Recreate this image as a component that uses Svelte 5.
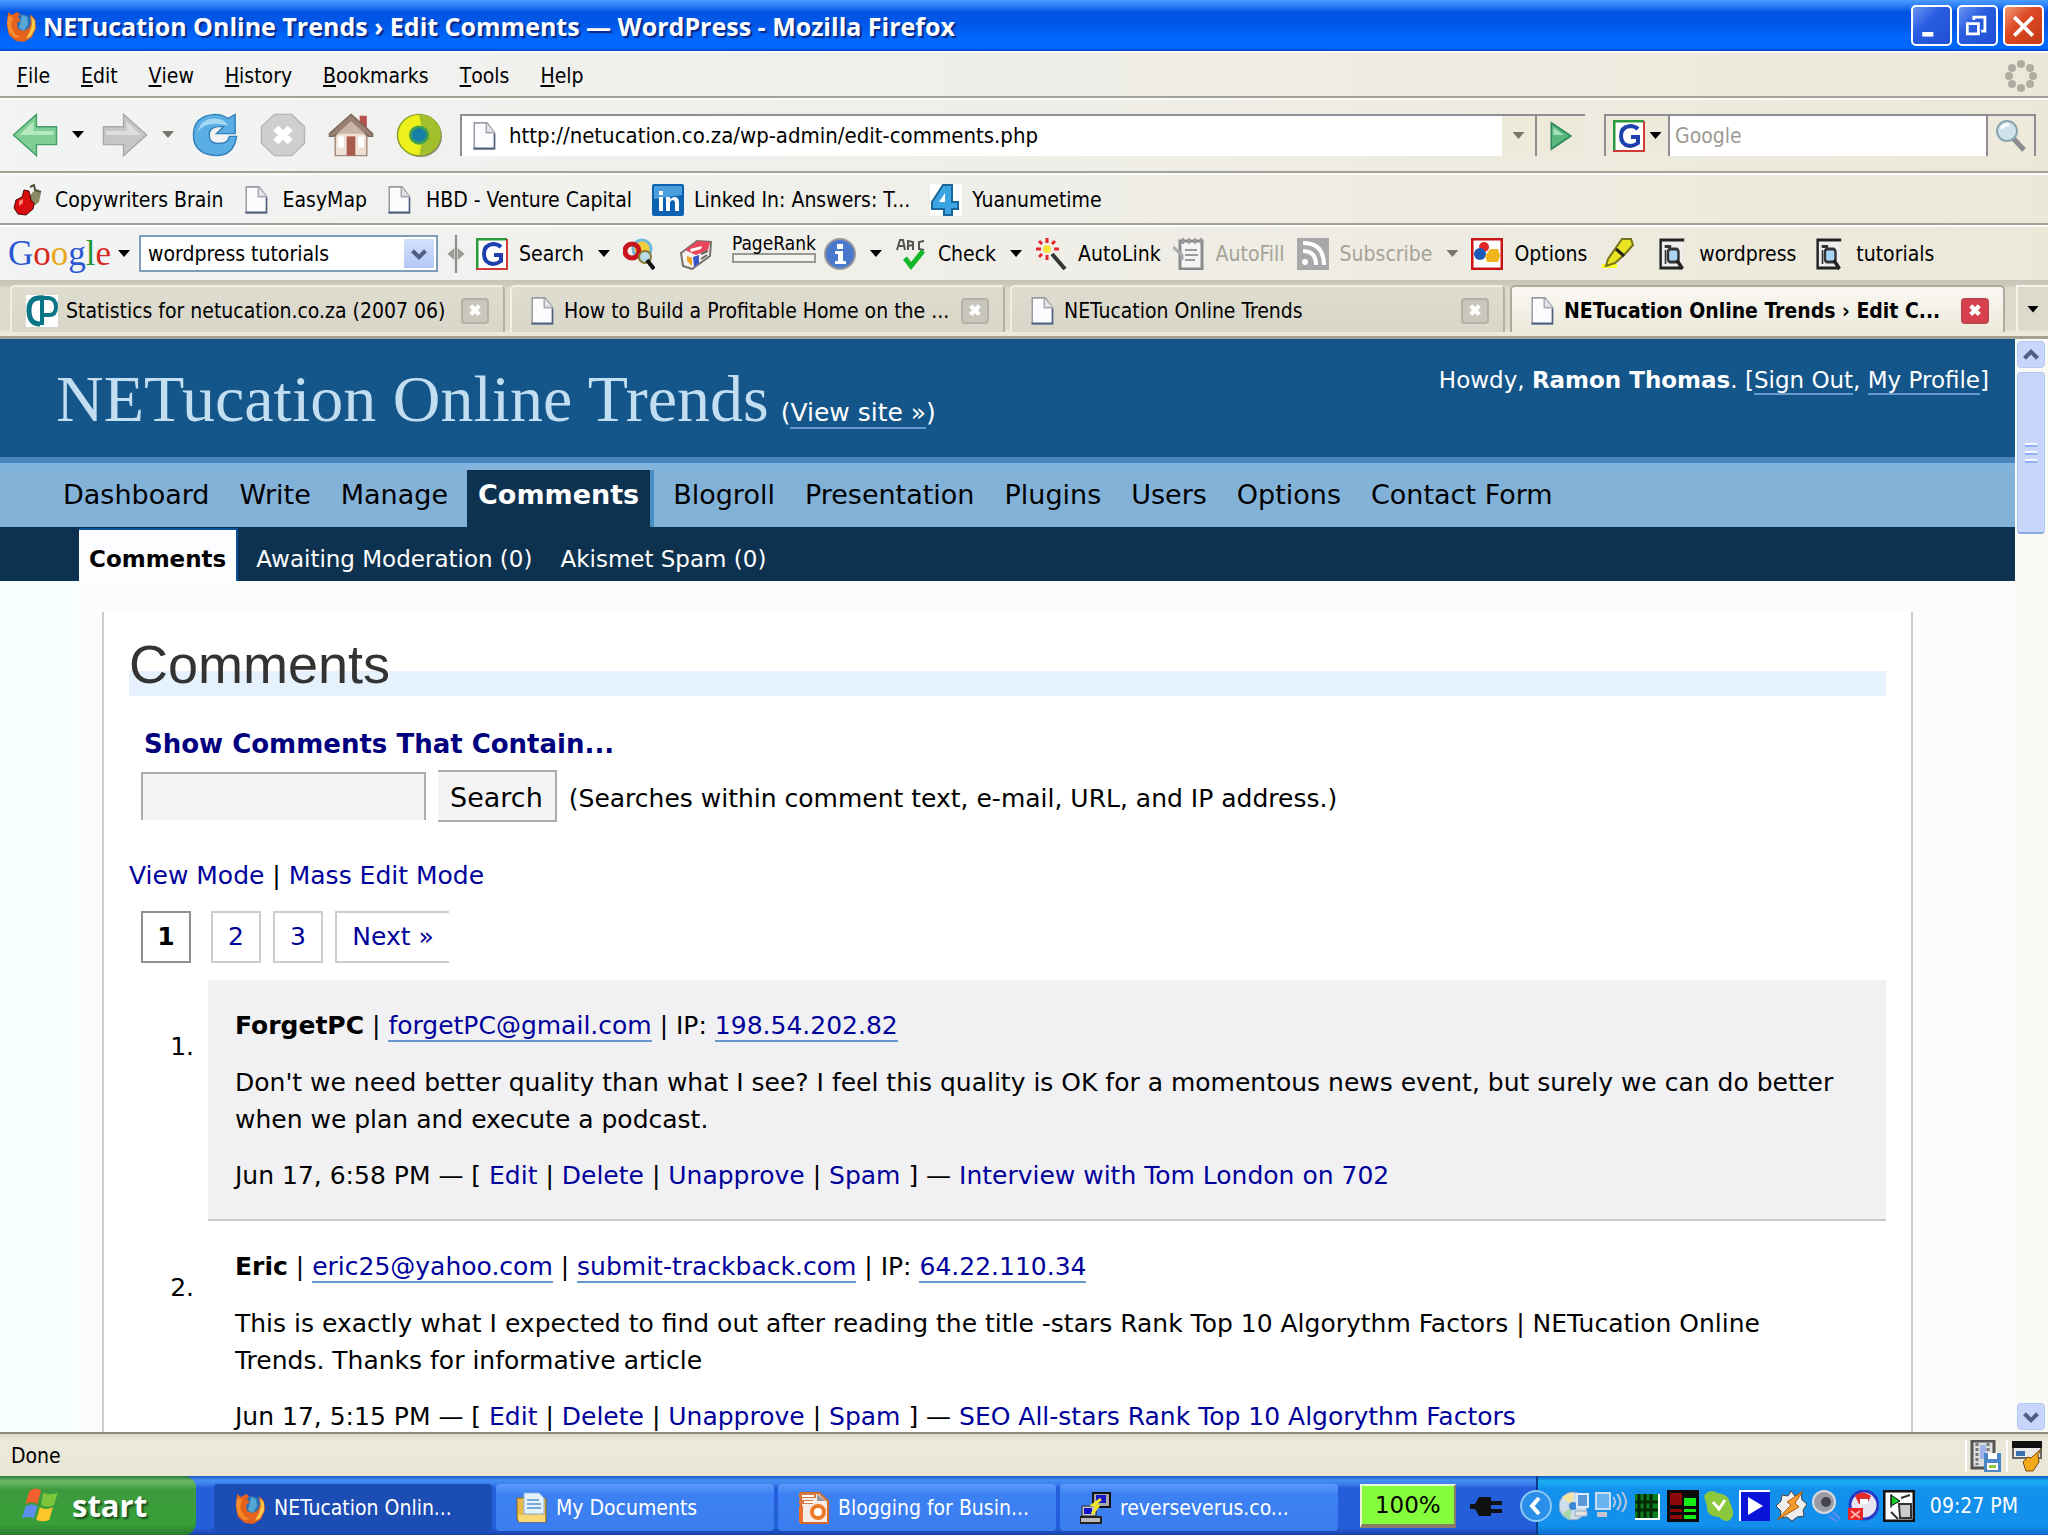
<script>
    let url = $state('http://netucation.co.za/wp-admin/edit-comments.php');
    let toolbarQuery = $state('wordpress tutorials');
    let webQuery = $state('');
    let commentQuery = $state('');

    const menus = ['File', 'Edit', 'View', 'History', 'Bookmarks', 'Tools', 'Help'];

    const bookmarks = [
        { icon: 'cherry', label: 'Copywriters Brain' },
        { icon: 'page', label: 'EasyMap' },
        { icon: 'page', label: 'HBD - Venture Capital' },
        { icon: 'linkedin', label: 'Linked In: Answers: T...' },
        { icon: 'four', label: 'Yuanumetime' }
    ];

    const tabs = [
        { icon: 'stats', label: 'Statistics for netucation.co.za (2007 06)' },
        { icon: 'page', label: 'How to Build a Profitable Home on the ...' },
        { icon: 'page', label: 'NETucation Online Trends' },
        { icon: 'page', label: 'NETucation Online Trends › Edit C...', active: true }
    ];

    const nav = ['Dashboard', 'Write', 'Manage', 'Comments', 'Blogroll', 'Presentation', 'Plugins', 'Users', 'Options', 'Contact Form'];
    const subnav = ['Comments', 'Awaiting Moderation (0)', 'Akismet Spam (0)'];
    const actions = ['Edit', 'Delete', 'Unapprove', 'Spam'];

    const comments = [
        {
            author: 'ForgetPC',
            links: ['forgetPC@gmail.com'],
            ip: '198.54.202.82',
            text: "Don't we need better quality than what I see? I feel this quality is OK for a momentous news event, but surely we can do better when we plan and execute a podcast.",
            date: 'Jun 17, 6:58 PM',
            post: 'Interview with Tom London on 702'
        },
        {
            author: 'Eric',
            links: ['eric25@yahoo.com', 'submit-trackback.com'],
            ip: '64.22.110.34',
            text: 'This is exactly what I expected to find out after reading the title -stars Rank Top 10 Algorythm Factors | NETucation Online Trends. Thanks for informative article',
            date: 'Jun 17, 5:15 PM',
            post: 'SEO All-stars Rank Top 10 Algorythm Factors'
        }
    ];

    const tasks = [
        { icon: 'firefox', label: 'NETucation Onlin...', active: true },
        { icon: 'folder', label: 'My Documents' },
        { icon: 'blog', label: 'Blogging for Busin...' },
        { icon: 'putty', label: 'reverseverus.co...' }
    ];

    const tray = ['disc', 'wireless', 'grid', 'meter', 'check', 'play', 'bolt', 'speaker', 'badge', 'card'];
</script>

{#snippet icon(name)}
    <svg class="icon icon-{name}" viewBox="0 0 32 32" preserveAspectRatio="none" aria-hidden="true">
        {#if name === 'firefox'}
            <circle cx="17" cy="16" r="12" fill="#2a6fb5" />
            <path d="M17 5l5 2 1 7-4 7-5-3z" fill="#55a7d8" />
            <path d="M3 2l4 3 5-3 3 2-2 4 3 2-4 3 1 6 6 2 5-3 2-6-1-8 5 5 1 9-4 9-8 5-8-1-7-6-2-9z" fill="#e4621c" />
            <path d="M26 6l4 5v8l-4 7-5 3 4-8 2-7z" fill="#f8c84a" />
            <path d="M3 6l5 1-2 9 4 8 6 3-6 1-6-6-2-9z" fill="#f58b2b" />
        {:else if name === 'page'}
            <path d="M3 1h17l10 11v19H3z" fill="#fcfcff" stroke="#9a9aa4" stroke-width="2" />
            <path d="M19 1v11h11" fill="#e4e4ea" stroke="#a8a8b0" stroke-width="2" />
            <path d="M2 30h28V13" fill="none" stroke="#4b6280" stroke-width="2" />
        {:else if name === 'cherry'}
            <path d="M14 14l8-8 6 3-2 9-6 5" fill="#8b8a62" />
            <path d="M17 3l4-2 1 5 6 2" fill="none" stroke="#55523a" stroke-width="2" />
            <path d="M11 6l5 1 2 9 3 3-1 6-7 6-8-1-4-6 2-8 6-3z" fill="#d80c0c" stroke="#4a0a08" stroke-width="1" />
            <path d="M6 17l4-2v4l-4 3z" fill="#ff8070" />
        {:else if name === 'linkedin'}
            <rect width="32" height="32" rx="2" fill="#0b63b2" />
            <path d="M2 2h28v9L2 15z" fill="#4b9edd" />
            <path d="M7 13h4v14H7zM7 7h4v4H7zM14 13h4v2q7-5 9 2v10h-4v-9q-2-4-5 0v9h-4z" fill="#fff" />
        {:else if name === 'four'}
            <rect width="32" height="32" fill="#fff" />
            <path d="M13 1h9v17h6v7h-6v6h-8v-6H2v-7z" fill="#3ca4e0" stroke="#1b6698" stroke-width="2" />
            <path d="M15 9v9H9z" fill="#fff" />
        {:else if name === 'stats'}
            <rect width="32" height="32" fill="#fff" />
            <path d="M16 30V3h7q7 1 7 9t-7 8h-7" fill="none" stroke="#087686" stroke-width="4" />
            <path d="M18 3Q3 1 3 15t11 14" fill="none" stroke="#087686" stroke-width="5" />
        {:else if name === 'back'}
            <path d="M1 16L17 1v9h14v13H17v8z" fill="#7fce96" stroke="#459f68" />
            <path d="M5 16l10-10v7h14v3z" fill="#b5e8be" />
        {:else if name === 'forward'}
            <path d="M31 16L15 1v9H1v13h14v8z" fill="#c6c6c9" stroke="#a9a9ac" />
            <path d="M27 16L17 6v7H3v3z" fill="#dededf" />
        {:else if name === 'reload'}
            <path d="M30 1v14H17l5-5q-10-1-10 6t8 6q5 0 6-5h5q-2 14-14 14Q1 30 1 16T16 1q5 0 9 3z" fill="#5aaee4" stroke="#2e7fba" />
            <path d="M4 14Q6 4 16 4q6 0 9 5-16-4-21 5z" fill="#a5d8f5" />
        {:else if name === 'stop'}
            <path d="M10 1h12l9 9v12l-9 9H10l-9-9V10z" fill="#cfcfcf" stroke="#b5b5b5" />
            <path d="M11 11l10 10M21 11L11 21" stroke="#fff" stroke-width="5" />
        {:else if name === 'home'}
            <path d="M22 2h5v9h-5z" fill="#b5524e" />
            <path d="M5 14h22v17H5z" fill="#efe0d5" stroke="#a58a7a" />
            <path d="M16 1l15 14v2h-3L16 7 4 17H1v-2z" fill="#9a8172" stroke="#7d685c" />
            <path d="M16 6L6 15h20z" fill="#c9b5a6" />
            <path d="M13 17h6v14h-6z" fill="#a85a4c" />
            <path d="M7 17h4v8H7zM21 17h4v8h-4z" fill="#fff" />
        {:else if name === 'orb'}
            <circle cx="17" cy="17" r="15" fill="#8a8a78" />
            <circle cx="16" cy="16" r="15" fill="#eef01c" stroke="#88a028" />
            <path d="M16 1a15 15 0 0 1 0 30l3-15z" fill="#a3c02c" />
            <circle cx="16" cy="16" r="6" fill="#1680a8" stroke="#3fa050" stroke-width="2" />
        {:else if name === 'go'}
            <path d="M3 2l26 14L3 30z" fill="#58b880" stroke="#2e8a58" stroke-width="2" />
            <path d="M6 7l14 8H6z" fill="#a5dfb8" />
        {:else if name === 'google'}
            <rect width="32" height="32" fill="#fff" />
            <path d="M1 32V1h30" fill="none" stroke="#2a9a3a" stroke-width="3" />
            <path d="M31 1v30H0" fill="none" stroke="#d23a3a" stroke-width="2" />
            <path d="M25 9Q22 6 17 6 8 7 8 16t9 10q4 0 8-3v-6h-7" fill="none" stroke="#1e3fae" stroke-width="4" />
        {:else if name === 'magnifier'}
            <path d="M18 18l11 12" stroke="#8b8b92" stroke-width="5" />
            <circle cx="12" cy="11" r="10" fill="#cfe3ea" stroke="#8aa5b0" stroke-width="2" />
            <path d="M6 9q3-5 8-4" stroke="#fff" stroke-width="3" fill="none" />
        {:else if name === 'splitter'}
            <path d="M16 0v32" stroke="#8e8e8a" stroke-width="4" />
            <path d="M13 11v10L1 16zM19 11v10l12-5z" fill="#9a9a96" />
        {:else if name === 'people'}
            <circle cx="19" cy="11" r="9" fill="#f0cf3c" stroke="#72b8d8" stroke-width="3" />
            <circle cx="9" cy="13" r="7" fill="none" stroke="#c8141c" stroke-width="5" />
            <circle cx="22" cy="19" r="6" fill="#b8dce8" stroke="#8a7a30" stroke-width="2" />
            <path d="M24 22l7 9" stroke="#111" stroke-width="4" />
        {:else if name === 'news'}
            <path d="M1 15L17 3l14 1-1 14-18 13-9-3z" fill="#f4f0ee" stroke="#77706c" stroke-width="2" />
            <path d="M5 12L18 3l12 1-2 8-12 5z" fill="#e8445c" />
            <path d="M10 11l12-3-1 3-10 3z" fill="#fff" />
            <path d="M7 18l5 2v8l-5-5z" fill="#f5a418" />
            <path d="M13 19l6-2v8l-5 4z" fill="#3555c8" />
            <path d="M21 16l7-3M21 21l6-4" stroke="#666" stroke-width="2" />
        {:else if name === 'info'}
            <circle cx="16" cy="16" r="15" fill="#4a78cc" stroke="#999" stroke-width="2" />
            <path d="M13 6h6v5h-6zM11 13h8v10h3v3H11v-3h3v-7h-3z" fill="#fff" />
        {:else if name === 'spell'}
            <path d="M2 12l3-10h3l2 10M4 8h5M13 2v10M13 3l5 1v3l-5 1M18 8v4M29 3l-5 1v7l5 1" fill="none" stroke="#555" stroke-width="2" />
            <path d="M10 20l6 8L28 13" fill="none" stroke="#12b82a" stroke-width="5" />
        {:else if name === 'wand'}
            <path d="M12 0v5M12 17v5M1 11h5M19 11h5M4 3l3 3M20 3l-3 3M4 19l3-3" stroke="#e42828" stroke-width="3" />
            <circle cx="12" cy="11" r="4" fill="#ffe43c" />
            <path d="M17 16l13 15" stroke="#333" stroke-width="4" />
        {:else if name === 'form'}
            <path d="M7 3h22v28H7z" fill="#f4f4f4" stroke="#8b8b8b" stroke-width="3" />
            <path d="M10 0v6M16 0v6M22 0v6M28 0v6M12 12h12M12 17h13M12 22h10" stroke="#999" stroke-width="2" />
            <path d="M0 9l9 8v5" fill="none" stroke="#aaa" stroke-width="3" />
        {:else if name === 'feed'}
            <rect width="32" height="32" fill="#a8a8a8" />
            <circle cx="8" cy="24" r="3" fill="#fff" />
            <path d="M6 13q13 0 13 14M6 5q21 0 21 22" fill="none" stroke="#fff" stroke-width="4" />
        {:else if name === 'options'}
            <rect x="1" y="1" width="30" height="30" fill="#fff" stroke="#c81414" stroke-width="3" />
            <circle cx="13" cy="9" r="5" fill="#e02828" />
            <circle cx="9" cy="16" r="6" fill="#1c58b8" />
            <path d="M14 18l5-7h8l2 7-2 6H16z" fill="#f0b41c" />
        {:else if name === 'marker'}
            <path d="M0 26h15v4H0z" fill="#ffff28" />
            <path d="M20 1h9l2 6-9 10-9 8-9 3 2-7z" fill="#e8e424" stroke="#77741c" stroke-width="2" />
            <path d="M14 11l8 7" stroke="#222" stroke-width="3" />
        {:else if name === 'find'}
            <path d="M3 2h26v28H3z" fill="#eee" />
            <path d="M31 2H2v28h25" fill="none" stroke="#222" stroke-width="3" />
            <path d="M7 7h8v3H7zM7 12h2v14H7z" fill="#333" />
            <rect x="11" y="11" width="13" height="13" rx="3" fill="#a8d4f5" stroke="#333" stroke-width="3" />
            <path d="M22 22l7 9" stroke="#222" stroke-width="4" />
        {:else if name === 'throbber'}
            <g fill="#b0aca2">
                <circle cx="16" cy="4" r="4" /><circle cx="25" cy="8" r="4" /><circle cx="28" cy="16" r="4" /><circle cx="25" cy="24" r="4" />
                <circle cx="16" cy="28" r="4" /><circle cx="7" cy="24" r="4" /><circle cx="4" cy="16" r="4" /><circle cx="7" cy="8" r="4" />
            </g>
        {:else if name === 'up' || name === 'down'}
            <path d={name === 'up' ? 'M8 20l8-8 8 8' : 'M8 12l8 8 8-8'} fill="none" stroke="#4d6185" stroke-width="5" />
        {:else if name === 'saver'}
            <rect x="2" y="1" width="22" height="27" fill="#ddd" stroke="#555" stroke-width="3" />
            <path d="M7 3v22M18 3v22" stroke="#777" stroke-width="3" stroke-dasharray="3 2" />
            <path d="M10 5h6v14h-6z" fill="#9fb4e8" />
            <path d="M14 13h17v19H14z" fill="#4a88c8" />
            <path d="M18 13h9v6h-9zM17 23h11v7H17z" fill="#fff" />
            <path d="M19 25h7v3h-7z" fill="#8cc83c" />
        {:else if name === 'bug'}
            <rect x="2" y="2" width="28" height="16" fill="#e8e8e8" stroke="#666" stroke-width="2" />
            <path d="M1 1h30v7H1z" fill="#111" />
            <path d="M5 11h9v5H5z" fill="#3a70b0" />
            <path d="M30 9l-3 6 1 7-6 9h-7l-3-9 5-5 3 1z" fill="#f4a81c" stroke="#7a4c08" />
        {:else if name === 'windows'}
            <path d="M6 4q5-5 10-1l-3 12q-5-3-10 0z" fill="#f2602c" />
            <path d="M18 5q6 3 12 0l-3 11q-5 3-11 0z" fill="#7cc43a" />
            <path d="M3 17q5-3 10 0l-3 11Q6 25 0 28z" fill="#5c8df0" />
            <path d="M15 18q5 3 11 0l-3 11q-5 3-11 0z" fill="#fcc52c" />
        {:else if name === 'folder'}
            <path d="M1 6h7V3h16l6 4v23H3l-2-3z" fill="#e9b84a" stroke="#8a6418" />
            <path d="M8 1h15l5 5v16H8z" fill="#e4f1fc" stroke="#8ab4d8" />
            <path d="M11 8h12M11 12h14M11 16h14" stroke="#78a8d8" stroke-width="2" />
            <path d="M2 23h27v7H3z" fill="#fbd876" />
        {:else if name === 'blog'}
            <path d="M3 1h18l9 8v22H3z" fill="#f4ebe4" stroke="#d86828" stroke-width="2" />
            <path d="M1 1h17v5H1zM1 8h14v4H1z" fill="#d87840" />
            <path d="M4 3h12v2H4zM6 9h10v2H6z" fill="#fff" />
            <path d="M19 2l9 7h-9z" fill="#999" />
            <circle cx="20" cy="20" r="6" fill="#fff" stroke="#ee7a28" stroke-width="4" />
            <path d="M3 14v16" stroke="#e8702c" stroke-width="4" />
        {:else if name === 'putty'}
            <path d="M13 1h17v14H13z" fill="#a8a8a8" stroke="#111" stroke-width="2" />
            <path d="M16 3h10v8H16z" fill="#1414c8" />
            <path d="M2 14h14v10H2z" fill="#c4c4c4" stroke="#222" />
            <path d="M4 16h8v6H4z" fill="#1414c8" />
            <path d="M0 25h21v6H0z" fill="#bbb" stroke="#222" stroke-width="2" />
            <path d="M21 7l-8 6 5 1-6 8" fill="none" stroke="#f0e428" stroke-width="3" />
        {:else if name === 'plug'}
            <path d="M0 14h5l4-7h12v4h11v4H21v4h11v4H21v3H9l-4-7H0z" fill="#111" />
        {:else if name === 'collapse'}
            <circle cx="16" cy="16" r="15" fill="#2a8fe8" stroke="#8cc8f4" stroke-width="2" />
            <path d="M19 8l-7 8 7 8" fill="none" stroke="#fff" stroke-width="4" />
        {:else if name === 'disc'}
            <circle cx="14" cy="16" r="14" fill="#cfdcec" stroke="#8fa6c0" />
            <path d="M14 16L3 7l11-5z" fill="#f4e6a0" />
            <path d="M14 16l-11 8 8 6z" fill="#a8d8a8" />
            <circle cx="14" cy="16" r="4" fill="#3a8ad8" />
            <path d="M18 4h11v13H18z" fill="#5c98d8" stroke="#dceaf8" stroke-width="2" />
            <path d="M16 21h12v5H16z" fill="#e4e4e4" stroke="#8fa6c0" />
        {:else if name === 'wireless'}
            <path d="M1 3h14v16H1z" fill="#6ab2f0" stroke="#c8ddf0" stroke-width="2" />
            <path d="M2 22h10v5H2z" fill="#c4c4cc" />
            <path d="M18 7q4 5 0 10M22 4q7 8 0 16M27 2q8 10 0 20" fill="none" stroke="#b8c8dc" stroke-width="2" />
        {:else if name === 'grid'}
            <rect x="4" y="4" width="23" height="24" fill="#0c7c1c" />
            <path d="M8 4v24M14 4v24M20 4v24M4 12h23M4 20h23" stroke="#022806" stroke-width="3" />
            <path d="M4 29h24V4" fill="none" stroke="#fff" stroke-width="2" />
        {:else if name === 'meter'}
            <rect width="32" height="32" fill="#0a0a0a" />
            <path d="M3 3h12v12H3zM3 19h12v3H3zM3 25h12v4H3z" fill="#8c0808" />
            <path d="M17 8h12v8H17zM17 19h12v3H17zM17 25h12v4H17z" fill="#14ec14" />
        {:else if name === 'check'}
            <path d="M1 6q6-8 13-3 12 1 13 10 7 14-2 18-6 0-9-4Q3 26 4 16z" fill="#8cc83c" />
            <path d="M10 12l6 7 6-9" fill="none" stroke="#fff" stroke-width="3" />
        {:else if name === 'play'}
            <rect x="1" y="1" width="30" height="30" fill="#0a14d8" />
            <path d="M1 31V1h30" fill="none" stroke="#fff" stroke-width="2" />
            <path d="M9 7l15 9-15 9z" fill="#fff" />
        {:else if name === 'bolt'}
            <path d="M16 1l4 5 6-3 1 7 5 4-4 6 1 6-7 1-5 4-5-4-7 1 1-7-5-5 5-5 1-6 6 1z" fill="#eee" stroke="#444" />
            <path d="M28 1L12 12l4 3L2 30l22-13-4-4z" fill="#f49c2c" stroke="#a85c10" />
        {:else if name === 'speaker'}
            <ellipse cx="13" cy="12" rx="11" ry="11" fill="#9c9ca4" stroke="#dadade" stroke-width="2" />
            <circle cx="15" cy="12" r="5" fill="#44444c" />
            <path d="M18 26l7 5M22 22l7 7" stroke="#6c8cf0" stroke-width="2" />
        {:else if name === 'badge'}
            <circle cx="17" cy="15" r="14" fill="#e8e4f0" stroke="#2838c8" stroke-width="3" />
            <path d="M8 6q7-7 16 0l-4 8h-8z" fill="#e02c2c" />
            <path d="M13 9h8v5h-8z" fill="#fff" />
            <path d="M1 18h15v12H1z" fill="#ec2424" />
            <path d="M4 21l9 7M13 21l-9 7" stroke="#ffb0b0" stroke-width="2" />
        {:else if name === 'card'}
            <rect x="1" y="1" width="30" height="30" fill="#fff" stroke="#111" stroke-width="3" />
            <path d="M18 8l9-3M16 14h12v14H17zM8 22l7 7" stroke="#333" fill="#ccc" stroke-width="2" />
            <path d="M8 4v14M8 5l9 6-9 5z" fill="#14c828" stroke="#111" />
        {/if}
    </svg>
{/snippet}

{#snippet links(author)}
    {#each author.links as link}
        | <a class="lined" href="#{link}">{link}</a>{' '}
    {/each}
    | IP: <a class="lined" href="#{author.ip}">{author.ip}</a>
{/snippet}

<div class="desktop">
    <header class="titlebar">
        {@render icon('firefox')}
        <h1>NETucation Online Trends › Edit Comments — WordPress - Mozilla Firefox</h1>
        <button class="win" aria-label="Minimize"><svg viewBox="0 0 40 41"><path d="M10 27h12v5H10z" fill="#fff" /></svg></button>
        <button class="win" aria-label="Restore"><svg viewBox="0 0 40 41"><path d="M16 14v-3h12v15h-4" fill="none" stroke="#fff" stroke-width="3" /><path d="M9 18h12v11H9z" fill="none" stroke="#fff" stroke-width="3" /></svg></button>
        <button class="win close" aria-label="Close"><svg viewBox="0 0 40 41"><path d="M10 11l20 20M30 11L10 31" stroke="#fff" stroke-width="4" /></svg></button>
    </header>

    <nav class="menubar bar">
        {#each menus as menu}
            <button><u>{menu[0]}</u>{menu.slice(1)}</button>
        {/each}
        <span class="fill"></span>
        {@render icon('throbber')}
    </nav>

    <div class="navbar bar">
        <button aria-label="Back">{@render icon('back')}</button>
        <button class="arrow" aria-label="Back history"></button>
        <button aria-label="Forward">{@render icon('forward')}</button>
        <button class="arrow dim" aria-label="Forward history"></button>
        <button aria-label="Reload">{@render icon('reload')}</button>
        <button aria-label="Stop">{@render icon('stop')}</button>
        <button aria-label="Home">{@render icon('home')}</button>
        <button aria-label="StumbleUpon">{@render icon('orb')}</button>
        <div class="address">
            {@render icon('page')}
            <input type="text" aria-label="Location" bind:value={url} />
            <button class="drop" aria-label="Show history"><i class="arrow dim"></i></button>
            <button class="go" aria-label="Go">{@render icon('go')}</button>
        </div>
        <div class="websearch">
            <button class="engine" aria-label="Search engine">{@render icon('google')}<i class="arrow"></i></button>
            <input type="text" aria-label="Web search" placeholder="Google" bind:value={webQuery} />
            <button class="look" aria-label="Search the web">{@render icon('magnifier')}</button>
        </div>
    </div>

    <nav class="bookmarks bar">
        {#each bookmarks as mark}
            <a href="#{mark.icon}">{@render icon(mark.icon)}<span>{mark.label}</span></a>
        {/each}
    </nav>

    <div class="toolbar bar">
        <button class="logo" aria-label="Google"><b class="blue">G</b><b class="red">o</b><b class="yellow">o</b><b class="blue">g</b><b class="green">l</b><b class="red">e</b></button>
        <i class="arrow"></i>
        <div class="combo">
            <input type="text" aria-label="Google toolbar search" bind:value={toolbarQuery} />
            <button aria-label="Recent searches">{@render icon('down')}</button>
        </div>
        {@render icon('splitter')}
        <button class="tool">{@render icon('google')}<span>Search</span></button>
        <i class="arrow"></i>
        <button class="tool roomy" aria-label="Groups">{@render icon('people')}</button>
        <button class="tool" aria-label="News">{@render icon('news')}</button>
        <div class="rank"><span>PageRank</span><i></i></div>
        <button class="tool" aria-label="Page info">{@render icon('info')}</button>
        <i class="arrow"></i>
        <button class="tool">{@render icon('spell')}<span>Check</span></button>
        <i class="arrow"></i>
        <button class="tool">{@render icon('wand')}<span>AutoLink</span></button>
        <button class="tool off">{@render icon('form')}<span>AutoFill</span></button>
        <button class="tool off">{@render icon('feed')}<span>Subscribe</span></button>
        <i class="arrow dim"></i>
        <button class="tool">{@render icon('options')}<span>Options</span></button>
        <button class="tool roomy" aria-label="Highlight">{@render icon('marker')}</button>
        <button class="tool word">{@render icon('find')}<span>wordpress</span></button>
        <button class="tool word">{@render icon('find')}<span>tutorials</span></button>
    </div>

    <div class="tabs">
        {#each tabs as tab}
            <div class="tab" class:active={tab.active}>
                <button class="pick">{@render icon(tab.icon)}<span>{tab.label}</span></button>
                <button class="shut" aria-label="Close tab"><svg viewBox="0 0 28 26"><path d="M9 8l10 10M19 8L9 18" stroke="#fff" stroke-width="5" /></svg></button>
            </div>
        {/each}
        <button class="alltabs" aria-label="List all tabs"><i class="arrow"></i></button>
    </div>

    <div class="view">
        <main>
            <header class="head">
                <div class="site">
                    <h1>NETucation Online Trends</h1>
                    <span>(<a class="lined" href="#site">View site »</a>)</span>
                </div>
                <p>Howdy, <strong>Ramon Thomas</strong>. [<a class="lined" href="#out">Sign Out</a>, <a class="lined" href="#profile">My Profile</a>]</p>
            </header>
            <nav class="adminmenu">
                {#each nav as item}
                    <a href="#{item}" class:current={item === 'Comments'}>{item}</a>
                {/each}
            </nav>
            <nav class="submenu">
                {#each subnav as item, i}
                    <a href="#{item}" class:current={i === 0}>{item}</a>
                {/each}
            </nav>
            <div class="page">
                <div class="wrap">
                    <h2>Comments</h2>
                    <form class="search" onsubmit={(event) => event.preventDefault()}>
                        <label class="legend" for="comment-search">Show Comments That Contain...</label>
                        <div class="row">
                            <input id="comment-search" type="text" bind:value={commentQuery} />
                            <button>Search</button>
                            <span>(Searches within comment text, e-mail, URL, and IP address.)</span>
                        </div>
                    </form>
                    <p class="modes"><a href="#view">View Mode</a> | <a href="#mass">Mass Edit Mode</a></p>
                    <div class="pager">
                        <strong>1</strong><a href="#p2">2</a><a href="#p3">3</a><a class="next" href="#next">Next »</a>
                    </div>
                    <ol>
                        {#each comments as comment, i}
                            <li>
                                <span class="num">{i + 1}.</span>
                                <div class="comment" class:alt={i % 2 === 0}>
                                    <p><strong>{comment.author}</strong> {@render links(comment)}</p>
                                    <p class="body">{comment.text}</p>
                                    <p>{comment.date} — [ {#each actions as action, n}{n ? ' | ' : ''}<a href="#{action}">{action}</a>{/each} ] — <a href="#post">{comment.post}</a></p>
                                </div>
                            </li>
                        {/each}
                    </ol>
                </div>
            </div>
        </main>
        <div class="scroll">
            <button aria-label="Scroll up">{@render icon('up')}</button>
            <div class="thumb"><i></i><i></i><i></i></div>
            <span class="fill"></span>
            <button aria-label="Scroll down">{@render icon('down')}</button>
        </div>
    </div>

    <footer class="status">
        <span class="fill">Done</span>
        <span class="panel">{@render icon('saver')}</span>
        <span class="panel">{@render icon('bug')}</span>
    </footer>

    <div class="taskbar">
        <button class="start">{@render icon('windows')}<span>start</span></button>
        <div class="tasks">
            {#each tasks as task}
                <button class="task" class:active={task.active}>{@render icon(task.icon)}<span>{task.label}</span></button>
            {/each}
        </div>
        <div class="battery"><span>100%</span>{@render icon('plug')}</div>
        <div class="tray">
            <button class="toggle" aria-label="Hide inactive icons">{@render icon('collapse')}</button>
            {#each tray as name}{@render icon(name)}{/each}
            <time>09:27 PM</time>
        </div>
    </div>
</div>

<style>
    :global(body) {
        margin: 0;
        overflow: hidden;
    }

    .desktop {
        display: flex;
        flex-direction: column;
        height: 100vh;
        background: #ece9d8;
        color: #000;
        font: 21px "DejaVu Sans Condensed", "Open Sans", sans-serif;
        white-space: nowrap;
    }

    .desktop * {
        box-sizing: border-box;
    }

    button, input {
        margin: 0;
        padding: 0;
        border: 0;
        border-radius: 0;
        background: none;
        color: inherit;
        font: inherit;
        outline: 0;
    }

    button {
        display: flex;
        flex: none;
        align-items: center;
    }

    h1, h2, p, ol {
        margin: 0;
        padding: 0;
        font-weight: normal;
    }

    a {
        color: #00019b;
        text-decoration: none;
    }

    .icon {
        display: block;
        flex: none;
        width: 32px;
        height: 32px;
    }

    .icon-page {
        width: 24px;
        height: 28px;
    }

    .fill {
        flex: 1;
    }

    .arrow {
        flex: none;
        width: 12px;
        height: 7px;
        background: #000;
        clip-path: polygon(0 0, 100% 0, 50% 100%);
    }

    .arrow.dim {
        background: #77756c;
    }

    /* window frame */
    .titlebar {
        display: flex;
        flex: none;
        align-items: center;
        height: 51px;
        padding: 0 4px 0 5px;
        background: linear-gradient(#4a9bff, #2b7df4 6px, #0054e3 12px, #0058e8 26px, #0068ff 38px, #0066fc 48px, #0043c8);
        color: #fff;
    }

    .titlebar h1 {
        flex: 1;
        margin-left: 6px;
        font: bold 25px "Open Sans", sans-serif;
        text-shadow: 2px 2px 1px #0a2a88;
    }

    .win {
        width: 41px;
        height: 41px;
        margin-left: 5px;
        border: 2px solid #fff;
        border-radius: 5px;
        background: linear-gradient(135deg, #6a96f4, #2a5de0 40%, #1f4fd4);
    }

    .win.close {
        background: linear-gradient(135deg, #f09a78, #dc4a24 40%, #c43a18);
    }

    .bar {
        display: flex;
        flex: none;
        align-items: center;
        border-bottom: 2px solid #a3a196;
        background: linear-gradient(to right, #f2f4f4, #efeee8 50%, #ece8d8);
        box-shadow: inset 0 2px #fdfdfb;
    }

    .menubar {
        height: 47px;
        padding: 4px 11px 0 17px;
        gap: 31px;
    }

    .navbar {
        height: 75px;
        padding: 0 12px;
    }

    .navbar > button .icon {
        width: 46px;
        height: 44px;
    }

    .navbar > button {
        margin-right: 22px;
    }

    .navbar > .arrow {
        margin: 0 18px 0 -8px;
    }

    .address, .websearch {
        display: flex;
        align-items: center;
        height: 42px;
        border-top: 2px solid #8e8e94;
        border-left: 2px solid #8e8e94;
        background: #fff;
    }

    .address {
        flex: 1;
        margin-left: -4px;
        padding-left: 10px;
    }

    .address input {
        flex: 1;
        min-width: 0;
        margin-left: 13px;
        font-size: 22px;
    }

    .drop, .go, .engine, .look {
        justify-content: center;
        align-self: stretch;
        background: #edeadb;
    }

    .drop {
        width: 33px;
    }

    .go {
        width: 50px;
        border-left: 2px solid #8e8e94;
    }

    .icon-go {
        width: 24px;
        height: 30px;
    }

    .websearch {
        margin-left: 19px;
    }

    .engine {
        width: 62px;
        gap: 5px;
    }

    .websearch input {
        width: 318px;
        height: 40px;
        padding-left: 5px;
        border-left: 2px solid #8e8e94;
    }

    .websearch input::placeholder {
        color: #9c9b94;
        opacity: 1;
    }

    .look {
        width: 50px;
        border: 0 solid #8e8e94;
        border-width: 0 2px;
    }

    .bookmarks {
        height: 52px;
        padding: 4px 0 0 13px;
        gap: 20px;
    }

    .bookmarks a {
        display: flex;
        align-items: center;
        gap: 10px;
        color: #000;
    }

    .bookmarks .icon-page {
        margin-right: 5px;
    }

    /* google toolbar */
    .toolbar {
        height: 55px;
        padding: 2px 0 0 8px;
        border-bottom: 0;
    }

    .toolbar > .arrow {
        margin: 0 13px 0 14px;
    }

    .logo {
        height: 44px;
        font: 35px "Liberation Serif", serif;
    }

    .toolbar > .logo + .arrow {
        margin: 0 9px 0 7px;
    }

    .logo b {
        font-weight: normal;
    }

    .blue { color: #2a56d4; }
    .red { color: #d8281e; }
    .yellow { color: #e8a818; }
    .green { color: #1c9a34; }

    .combo {
        display: flex;
        width: 299px;
        height: 37px;
        padding: 2px;
        border: 2px solid #7f9db9;
        background: #fff;
    }

    .combo input {
        flex: 1;
        min-width: 0;
        padding-left: 5px;
    }

    .combo button {
        justify-content: center;
        width: 30px;
        background: linear-gradient(#d4e0fc, #b4c8f4);
    }

    .combo .icon {
        width: 26px;
        height: 26px;
    }

    .icon-splitter {
        width: 18px;
        height: 38px;
        margin: 0 11px 0 9px;
    }

    .tool {
        gap: 11px;
    }

    .off {
        margin-left: 12px;
        color: #a5a396;
    }

    .tool + .tool:not(.off) {
        margin-left: 15px;
    }

    .tool.roomy {
        margin-right: 10px;
    }

    .tool.word {
        gap: 14px;
    }

    .tool.word + .tool.word {
        margin-left: 20px;
    }

    .icon-find {
        width: 26px;
    }

    .rank {
        margin: 0 8px 12px 20px;
        font-size: 19px;
        line-height: 20px;
    }

    .rank i {
        display: block;
        height: 10px;
        border: 2px solid #9a9a94;
        background: #f4f4ee;
    }

    .tabs {
        display: flex;
        flex: none;
        align-items: flex-start;
        height: 59px;
        padding: 5px 0 0 10px;
        gap: 5px;
        border-bottom: 3px solid #a5a294;
        background: linear-gradient(#c6c4b5, #cfcdbf 6px, #dcdacb 8px, #dcdacb 50px, #ece9da 51px);
    }

    .tab {
        display: flex;
        flex: 1;
        align-items: center;
        min-width: 0;
        height: 47px;
        padding: 2px 14px 0;
        border: 2px solid #f0efe6;
        border-right-color: #b2b0a2;
        border-bottom: 0;
        border-radius: 5px 5px 0 0;
        background: linear-gradient(#dfddd0, #d8d6c8);
    }

    .tab.active {
        border-color: #aeac9e;
        background: linear-gradient(#faf8f2, #ece9dc);
        font-weight: bold;
    }

    .pick {
        flex: 1;
        min-width: 0;
        gap: 8px;
    }

    .pick .icon-page {
        margin: 0 2px 0 4px;
    }

    .shut {
        width: 28px;
        height: 26px;
        border: 2px solid #b4b2a6;
        border-radius: 4px;
        background: #c9c7bb;
    }

    .active .shut {
        border-color: #c04450;
        background: #d8404e;
    }

    .alltabs {
        justify-content: center;
        width: 32px;
        height: 46px;
        margin-left: 6px;
        border: 0 solid #f4f2ea;
        border-width: 2px 0 0 2px;
    }

    /* page */
    .view {
        display: flex;
        flex: 1;
        min-height: 0;
        overflow: hidden;
        font-family: "DejaVu Sans", sans-serif;
    }

    main {
        flex: 1;
        min-width: 0;
    }

    .lined {
        border-bottom: 2px solid #6699cc;
    }

    .head {
        display: flex;
        justify-content: space-between;
        height: 124px;
        padding: 20px 26px 0 56px;
        border-bottom: 6px solid #4a86b9;
        background: #14568a;
        color: #fff;
        font-size: 23px;
    }

    .head a {
        color: #fff;
    }

    .site {
        display: flex;
        align-items: baseline;
        gap: 12px;
        font-size: 25px;
    }

    .head h1 {
        color: #c3def1;
        font: 66px/80px "Liberation Serif", serif;
    }

    .head p {
        padding-top: 8px;
    }

    .adminmenu {
        display: flex;
        align-items: flex-end;
        gap: 8px;
        height: 64px;
        padding-left: 52px;
        background: linear-gradient(#80b4e0, #83b2d8 10px);
        font-size: 27px;
    }

    .adminmenu a {
        padding: 0 11px;
        line-height: 50px;
        padding-bottom: 7px;
        color: #000;
    }

    .adminmenu .current {
        border-right: 4px solid #4a8fc4;
        background: #0d324f;
        color: #fff;
        font-weight: bold;
    }

    .submenu {
        display: flex;
        align-items: flex-end;
        height: 54px;
        padding-left: 79px;
        gap: 8px;
        background: #0d324f;
        font-size: 23px;
    }

    .submenu a {
        padding: 8px 10px 0;
        color: #fff;
        line-height: 43px;
    }

    .submenu .current {
        border-right: 2px solid #0c5399;
        border-top: 2px solid #0c5399;
        background: #fdfcff;
        color: #000;
        font-weight: bold;
    }

    .page {
        padding: 31px 102px 0;
        background: linear-gradient(to right, #f8ffff 79px, #fcfcff 79px);
        font-size: 25px;
    }

    .wrap {
        padding: 20px 25px 80px;
        border: 2px solid #ccc;
        border-width: 0 2px;
        background: #fff;
    }

    h2 {
        background: linear-gradient(transparent 39px, #e5f2fd 39px);
        color: #333;
        font: 54px/64px "Liberation Sans", sans-serif;
    }

    .search {
        padding: 28px 12px 0;
    }

    .legend {
        display: block;
        margin-left: 3px;
        color: #00007f;
        font-size: 26px;
        font-weight: bold;
        line-height: 40px;
    }

    .row {
        display: flex;
        align-items: center;
        margin-top: 6px;
        gap: 12px;
    }

    .row input {
        width: 285px;
        height: 48px;
        border: 2px solid #acacac;
        border-bottom: 0;
        background: #f4f4f6;
    }

    .row button {
        height: 52px;
        padding: 2px 12px 0;
        border: 2px solid #acacac;
        border-left: 0;
        background: #f4f4f6;
        font-size: 27px;
    }

    .row span {
        padding-top: 4px;
    }

    .modes {
        margin-top: 35px;
        line-height: 37px;
    }

    .pager {
        display: flex;
        gap: 12px;
        margin: 17px 12px;
        line-height: 48px;
    }

    .pager > * {
        width: 50px;
        border: 2px solid #ccc;
        text-align: center;
    }

    .pager strong {
        margin-right: 8px;
        border-color: #909090;
    }

    .pager .next {
        width: 114px;
        border-right: 0;
    }

    li {
        display: flex;
    }

    .num {
        flex: none;
        width: 79px;
        padding: 52px 14px 0 0;
        line-height: 30px;
        text-align: right;
    }

    .comment {
        flex: 1;
        padding: 27px 45px 25px 27px;
        border-bottom: 2px solid #c8c8ca;
        line-height: 37px;
        white-space: normal;
    }

    .alt {
        background: #f1f0f3;
    }

    .body {
        margin: 20px 0 19px;
    }

    .scroll {
        display: flex;
        flex-direction: column;
        width: 33px;
        padding: 2px;
        gap: 4px;
        background: #fafaf4;
    }

    .scroll button, .thumb {
        width: 28px;
        height: 27px;
        border: 1px solid #b4c8f4;
        border-radius: 4px;
        background: #c8d6fb;
    }

    .thumb {
        display: flex;
        flex-direction: column;
        align-items: center;
        justify-content: center;
        height: 162px;
        gap: 4px;
        border-bottom: 2px solid #8caae6;
    }

    .thumb i {
        width: 12px;
        height: 4px;
        border-bottom: 2px solid #8cb0f8;
        background: #f4f8ff;
    }

    .scroll .icon {
        width: 26px;
        height: 26px;
    }

    /* bottom bars */
    .status {
        display: flex;
        flex: none;
        align-items: center;
        height: 44px;
        padding: 4px 5px 2px 11px;
        border-top: 2px solid #8c8a7e;
        background: linear-gradient(#dbd9ca, #ece9da 8px, #ebe6d6);
    }

    .panel {
        margin-left: 4px;
        padding-left: 3px;
        border-left: 2px solid #fff;
    }

    .taskbar {
        display: flex;
        flex: none;
        height: 59px;
        background: linear-gradient(#1f55c0, #4590f0 4px, #3a80f0 8px, #245edb 12px, #245edb 52px, #1941a5);
        color: #fff;
    }

    .start {
        width: 196px;
        padding: 0 0 2px 22px;
        gap: 12px;
        border-radius: 0 12px 12px 0;
        background: linear-gradient(#2a7a38, #6cb868 5px, #3c9a3c 14px, #38a038 48px, #2a7a2c);
        font: bold 31px "Open Sans", sans-serif;
        text-shadow: 2px 2px 2px #1a4a1c;
    }

    .start .icon {
        width: 38px;
        height: 36px;
    }

    .tasks {
        display: flex;
        flex: 1;
        padding: 8px 0 4px 18px;
        gap: 4px;
    }

    .task {
        flex: 1;
        min-width: 0;
        padding-left: 20px;
        gap: 8px;
        border-radius: 4px;
        background: linear-gradient(#5a9cfa, #3c81f3 10px, #3a7df0);
    }

    .task.active {
        background: #1c4db5;
    }

    .battery {
        display: flex;
        align-items: center;
        margin: 0 34px 0 22px;
        gap: 14px;
    }

    .battery span {
        width: 96px;
        border: 2px solid #e8f8d8;
        border-right-color: #8a7a6a;
        border-bottom: 4px solid #8a7a6a;
        background: #85fc3c;
        color: #000;
        font: 23px/38px "DejaVu Sans", sans-serif;
        text-align: center;
    }

    .tray {
        display: flex;
        align-items: center;
        padding-right: 30px;
        gap: 4px;
        border-left: 2px solid #0a3a8c;
        background: linear-gradient(#0a5cc0, #1cb0f4 5px, #1290ec 14px, #1290ec 50px, #0c68c8);
    }

    .toggle {
        margin: 0 3px 0 -18px;
    }

    time {
        margin-left: 11px;
    }
</style>
